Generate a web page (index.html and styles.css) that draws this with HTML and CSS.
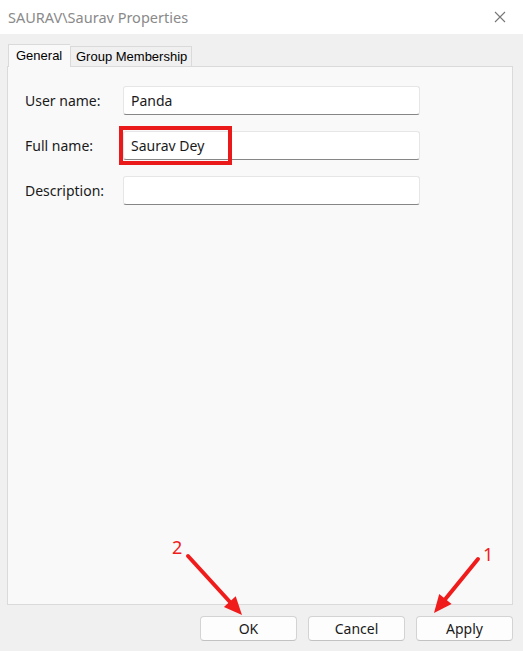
FILE: index.html
```html
<html>
  <head>
    <link rel="stylesheet" href="styles.css">
  </head>
  <body>
    <div class="window">
      <header class="titlebar">
        <span class="title">SAURAV\Saurav Properties</span>
        <svg class="close" width="12" height="12" viewBox="0 0 12 12">
          <path d="M1 1 L11 11 M11 1 L1 11" stroke="#777" stroke-width="1.1" fill="none" />
        </svg>
      </header>

      <main class="dialog">
        <ul class="tabs">
          <li class="tab tab-active">General</li>
          <li class="tab">Group Membership</li>
        </ul>

        <section class="panel">
          <div class="row">
            <label class="row-label">User name:</label>
            <div class="field">Panda</div>
          </div>
          <div class="row">
            <label class="row-label">Full name:</label>
            <div class="field field-marked">
              Saurav Dey
              <span class="highlight"></span>
            </div>
          </div>
          <div class="row">
            <label class="row-label">Description:</label>
            <div class="field"></div>
          </div>
        </section>

        <footer class="buttons">
          <button class="btn">OK</button>
          <button class="btn">Cancel</button>
          <button class="btn">Apply</button>
        </footer>
      </main>

      <svg class="arrows" width="523" height="651" viewBox="0 0 523 651">
        <!-- step 2: OK -->
        <text x="172" y="554" class="step">2</text>
        <line x1="188" y1="556" x2="230" y2="602" />
        <polygon points="242,615 223.9,607.1 235.7,596.3" />
        <!-- step 1: Apply -->
        <text x="483" y="561" class="step">1</text>
        <line x1="478" y1="559" x2="445.4" y2="599" />
        <polygon points="434,613 451.6,604.1 439.2,593.9" />
      </svg>
    </div>
  </body>
</html>
```

FILE: styles.css
```css
html,
body,
ul {
  margin: 0;
  padding: 0;
}
ul {
  list-style-type: none;
}
html {
  background: #f0f0f0;
}
body {
  font-family: "Noto Sans", "Open Sans", sans-serif;
  font-size: 14px;
  color: #1a1a1a;
}
.window {
  position: relative;
  width: 523px;
  height: 651px;
  display: flex;
  flex-direction: column;
  background: #f0f0f0;
  overflow: hidden;
}
.titlebar {
  height: 34px;
  flex: none;
  background: #fff;
  display: flex;
  align-items: center;
  justify-content: space-between;
  padding: 0 17px 0 8px;
}
.title {
  color: #8a8a8a;
  font-size: 14.5px;
}
.close {
  display: block;
}
.dialog {
  flex: 1;
  display: flex;
  flex-direction: column;
  padding: 10px 10px 10px 7px;
}
.tabs {
  display: flex;
  align-items: flex-end;
  height: 22px;
  padding-left: 1px;
  font-family: "Liberation Sans", Arial, sans-serif;
  font-size: 13px;
  color: #000;
}
.tab {
  height: 20px;
  line-height: 19px;
  padding: 0 4px 0 5px;
  border: 1px solid #dadada;
  border-bottom: none;
  background: #f0f0f0;
  box-sizing: border-box;
}
.tab-active {
  position: relative;
  z-index: 1;
  height: 23px;
  margin-bottom: -1px;
  line-height: 22px;
  padding: 0 7px;
  width: 62px;
  background: #f9f9f9;
  border-right: none;
}
.panel {
  flex: 1;
  background: #f9f9f9;
  border: 1px solid #dadada;
  padding: 19px 0 0 17px;
  display: flex;
  flex-direction: column;
  gap: 16px;
}
.row {
  display: flex;
  align-items: center;
}
.row-label {
  width: 98px;
}
.field {
  position: relative;
  width: 297px;
  height: 29px;
  box-sizing: border-box;
  background: #fff;
  border: 1px solid #e6e6e6;
  border-bottom-color: #868686;
  border-radius: 3px;
  padding: 0 7px;
  line-height: 27px;
}
.highlight {
  position: absolute;
  left: -5px;
  top: -6px;
  width: 113px;
  height: 39px;
  border: 4px solid #ea1a1a;
  box-sizing: border-box;
}
.buttons {
  display: flex;
  justify-content: flex-end;
  gap: 11px;
  margin-top: 11px;
}
.btn {
  width: 97px;
  height: 25px;
  background: #fdfdfd;
  border: 1px solid #d3d3d3;
  border-bottom-color: #c2c2c2;
  border-radius: 4px;
  font-family: "Noto Sans", "Open Sans", sans-serif;
  font-size: 14px;
  color: #1a1a1a;
  padding: 0;
}
.arrows {
  position: absolute;
  left: 0;
  top: 0;
  pointer-events: none;
}
.arrows line {
  stroke: #f01c1c;
  stroke-width: 4;
  stroke-linecap: round;
}
.arrows polygon {
  fill: #f01c1c;
}
.arrows .step {
  fill: #f01c1c;
  font-family: "Noto Sans", sans-serif;
  font-size: 18px;
}
```
